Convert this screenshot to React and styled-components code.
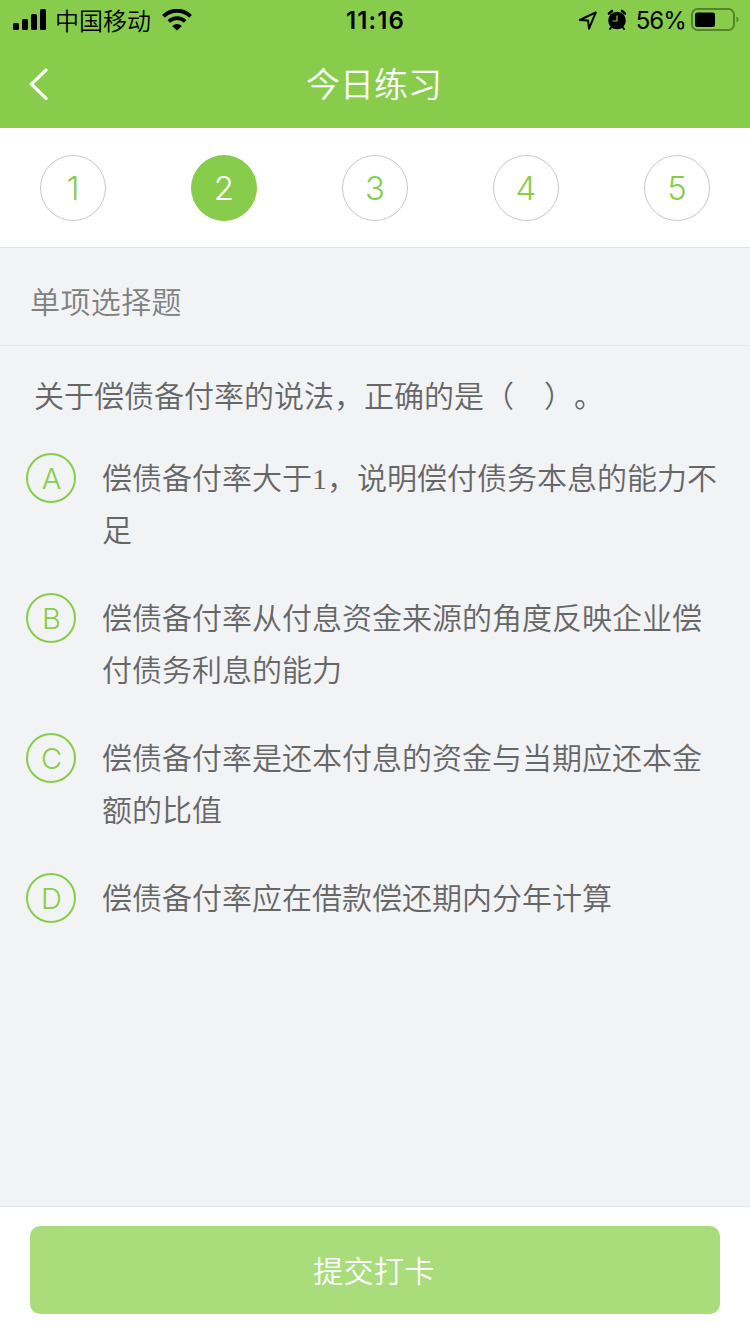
import styled, { createGlobalStyle } from "styled-components";

const GlobalStyle = createGlobalStyle`
  * {
    box-sizing: border-box;
  }
  body {
    margin: 0;
    background: #f2f3f5;
  }
`;

const Container = styled.div`
  display: flex;
  flex-direction: column;
  height: 1334px;
  width: 750px;
  font-family: Inter, "Noto Sans CJK SC", sans-serif;
  font-weight: 350;
  background: #f2f3f5;
  text-spacing-trim: space-all;
`;

const StatusBar = styled.div`
  display: grid;
  grid-template-columns: 1fr auto 1fr;
  align-items: center;
  height: 40px;
  padding: 0 11px 0 13px;
  background: #87cd4b;
  color: #000;
`;

const StatusLeft = styled.div`
  display: flex;
  align-items: center;
`;

const Carrier = styled.span`
  margin: 0 11px 0 8px;
  font-family: "Noto Sans CJK SC", sans-serif;
  font-size: 24px;
  line-height: 40px;
`;

const Clock = styled.span`
  padding: 1px 1px 0 0;
  font-size: 24px;
  font-weight: 600;
  letter-spacing: 1.1px;
`;

const StatusRight = styled.div`
  display: flex;
  align-items: center;
  justify-content: flex-end;
`;

const Percent = styled.span`
  margin: 1px 4px 0 9px;
  font-size: 24px;
  font-weight: 370;
  letter-spacing: -0.9px;
`;

const Header = styled.header`
  display: grid;
  grid-template-columns: 60px 1fr 60px;
  align-items: center;
  height: 88px;
  background: #87cd4b;
`;

const Back = styled.button`
  display: flex;
  padding: 0 0 0 28px;
  border: 0;
  background: none;
`;

const Title = styled.h1`
  margin: 0;
  padding: 0 2px 2px 0;
  color: #fff;
  font-family: "Noto Sans CJK SC", sans-serif;
  font-size: 34px;
  font-weight: 350;
  line-height: 86px;
  text-align: center;
`;

const Steps = styled.nav`
  display: flex;
  justify-content: space-between;
  align-items: center;
  height: 120px;
  padding: 0 40px;
  border-bottom: 1px solid #e2e2e3;
  background: #fff;
`;

const Step = styled.button`
  width: 66px;
  height: 66px;
  padding: 0;
  border: 1px solid ${(props) => (props.$active ? "#87cd4b" : "#c8c8c8")};
  border-radius: 50%;
  background: ${(props) => (props.$active ? "#87cd4b" : "#fff")};
  color: ${(props) => (props.$active ? "#fff" : "#87cd4b")};
  font-family: Inter, sans-serif;
  font-size: 33px;
  font-weight: 365;
  line-height: 64px;
`;

const TypeBar = styled.div`
  height: 98px;
  padding: 4px 30px 0;
  border-bottom: 1px solid #e5e6e8;
  color: #808080;
  font-family: "Noto Sans CJK SC", sans-serif;
  font-size: 30px;
  letter-spacing: 0.4px;
  line-height: 96px;
`;

const Main = styled.main`
  flex: 1;
  padding: 25px 26px 0;
  color: #666;
  font-family: "Liberation Serif", "Noto Sans CJK SC", serif;
  font-size: 30px;
  line-height: 52px;
`;

const Question = styled.p`
  margin: 0 0 30px 8px;
`;

const Options = styled.div`
  display: flex;
  flex-direction: column;
  gap: 36px;
`;

const Option = styled.div`
  display: flex;
  align-items: flex-start;
`;

const Letter = styled.span`
  flex: none;
  width: 50px;
  height: 50px;
  margin-right: 26px;
  padding-left: 1px;
  border: 2px solid #87cd4b;
  border-radius: 50%;
  color: #87cd4b;
  font-family: Inter, sans-serif;
  font-size: 29px;
  font-weight: 360;
  line-height: 48px;
  text-align: center;
`;

const OptionText = styled.span`
  width: 620px;
`;

const Footer = styled.footer`
  height: 128px;
  padding: 19px 30px 0;
  border-top: 1px solid #e5e6e8;
  background: #fff;
`;

const Submit = styled.button`
  display: block;
  width: 100%;
  height: 88px;
  padding: 0 2px 2px 0;
  border: 0;
  border-radius: 10px;
  background: #a9dc7a;
  color: #fff;
  font-family: "Noto Sans CJK SC", sans-serif;
  font-size: 30px;
  font-weight: 350;
  letter-spacing: 0.4px;
`;

const steps = [1, 2, 3, 4, 5];

const options = [
  { letter: "A", text: "偿债备付率大于1，说明偿付债务本息的能力不足" },
  { letter: "B", text: "偿债备付率从付息资金来源的角度反映企业偿付债务利息的能力" },
  { letter: "C", text: "偿债备付率是还本付息的资金与当期应还本金额的比值" },
  { letter: "D", text: "偿债备付率应在借款偿还期内分年计算" },
];

const SignalIcon = () => (
  <svg width="34" height="22" viewBox="0 0 34 22">
    <rect x="0" y="14" width="6" height="7" rx="1.6" />
    <rect x="9" y="10" width="6" height="11" rx="1.6" />
    <rect x="18" y="5" width="6" height="16" rx="1.6" />
    <rect x="27" y="0" width="6" height="21" rx="1.6" />
  </svg>
);

const WifiIcon = () => (
  <svg width="30" height="22" viewBox="0 0 30 22">
    <path d="M1.5 7.3a19.2 19.2 0 0 1 27 0" fill="none" stroke="#000" strokeWidth="4" />
    <path d="M6.8 12.5a11.8 11.8 0 0 1 16.4 0" fill="none" stroke="#000" strokeWidth="3.8" />
    <path d="M15 21.5l-4.8-4.6a7 7 0 0 1 9.6 0z" />
  </svg>
);

const LocationIcon = () => (
  <svg width="20" height="20" viewBox="0 0 20 20">
    <path
      d="M17.8 2.4L1.8 10l8.3.5.9 8.2z"
      fill="none"
      stroke="#000"
      strokeWidth="2"
      strokeLinejoin="round"
    />
  </svg>
);

const AlarmIcon = styled(({ className }) => (
  <svg className={className} width="20" height="22" viewBox="0 0 20 22">
    <circle cx="10" cy="11.5" r="8.8" />
    <path d="M2 4.5L5 2M18 4.5L15 2" stroke="#000" strokeWidth="2.6" strokeLinecap="round" />
    <path d="M4.5 18l-1.5 2M15.5 18l1.5 2" stroke="#000" strokeWidth="2" strokeLinecap="round" />
    <path d="M10 6.5v5.5H5.5" fill="none" stroke="#87cd4b" strokeWidth="1.2" />
  </svg>
))`
  margin-left: 9px;
`;

const BatteryIcon = () => (
  <svg width="49" height="24" viewBox="0 0 49 24">
    <rect x="2" y="1" width="42" height="21" rx="5.5" fill="none" stroke="#55842d" strokeWidth="2" />
    <rect x="5" y="4.5" width="20" height="14.5" rx="2.5" />
    <path d="M46.5 8.5c2.6.8 2.6 5.2 0 6z" fill="#55842d" />
  </svg>
);

const BackIcon = () => (
  <svg width="22" height="32" viewBox="0 0 22 32">
    <path
      d="M18 2L3.5 16.2L18 30.4"
      fill="none"
      stroke="#fff"
      strokeWidth="3.2"
      strokeLinecap="round"
    />
  </svg>
);

const App = () => {
  return (
    <>
      <GlobalStyle />
      <Container>
        <StatusBar>
          <StatusLeft>
            <SignalIcon />
            <Carrier>中国移动</Carrier>
            <WifiIcon />
          </StatusLeft>
          <Clock>11:16</Clock>
          <StatusRight>
            <LocationIcon />
            <AlarmIcon />
            <Percent>56%</Percent>
            <BatteryIcon />
          </StatusRight>
        </StatusBar>

        <Header>
          <Back>
            <BackIcon />
          </Back>
          <Title>今日练习</Title>
        </Header>

        <Steps>
          {steps.map((step) => (
            <Step key={step} $active={step === 2}>
              {step}
            </Step>
          ))}
        </Steps>

        <TypeBar>单项选择题</TypeBar>

        <Main>
          <Question>关于偿债备付率的说法，正确的是（　）。</Question>
          <Options>
            {options.map((item) => (
              <Option key={item.letter}>
                <Letter>{item.letter}</Letter>
                <OptionText>{item.text}</OptionText>
              </Option>
            ))}
          </Options>
        </Main>

        <Footer>
          <Submit>提交打卡</Submit>
        </Footer>
      </Container>
    </>
  );
};

export default App;
